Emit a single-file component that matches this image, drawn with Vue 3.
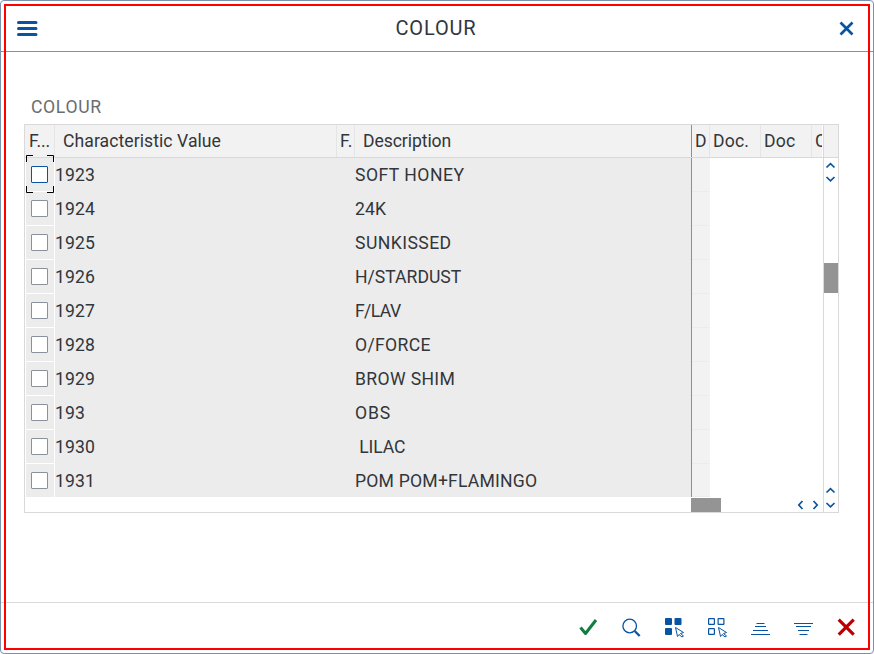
<script setup>
const rows = [
  { code: '1923', text: 'SOFT HONEY', spacing: 0.47 },
  { code: '1924', text: '24K', spacing: 0.1 },
  { code: '1925', text: 'SUNKISSED', spacing: 0.43 },
  { code: '1926', text: 'H/STARDUST', spacing: 0 },
  { code: '1927', text: 'F/LAV', spacing: -0.6 },
  { code: '1928', text: 'O/FORCE', spacing: 0.32 },
  { code: '1929', text: 'BROW SHIM', spacing: 0.35 },
  { code: '193', text: 'OBS', spacing: 0.8 },
  { code: '1930', text: '\u00a0LILAC', spacing: -0.15 },
  { code: '1931', text: 'POM POM+FLAMINGO', spacing: 0.2 },
]
</script>

<template>
  <div class="dialog">
    <header class="bar">
      <svg class="menu" width="22" height="16" viewBox="0 0 22 16"><path d="M2.500 1.500h17.500M2.500 7.500h17.500M2.500 13.500h17.500" stroke="#0854a0" stroke-width="3" stroke-linecap="round" /></svg>
      <h1>COLOUR</h1>
      <svg class="close" width="16" height="16" viewBox="0 0 16 16"><path d="M1.500 1.500l12 12M13.500 1.500L1.500 13.500" stroke="#0854a0" stroke-width="2.700" /></svg>
    </header>
    <main>
      <h2>COLOUR</h2>
      <div class="table">
        <div class="grid">
          <div class="head">
            <span class="c1">F...</span><span class="c2">Characteristic Value</span><span class="c3">F.</span><span class="c4">Description</span><span class="c5">D</span><span class="c6">Doc.</span><span class="c7">Doc</span><span class="c8">C</span>
          </div>
          <div v-for="(r, i) in rows" :key="r.code" class="row" :class="{ active: i === 0 }">
            <div class="check"><i></i><svg v-if="i === 0" class="focus" width="28" height="38" viewBox="0 0 28 38"><path d="M.5 7V.5H7M21 .5h6.500V7M.5 31v6.500H7M21 37.500h6.500V31" fill="none" stroke="#000" /></svg></div>
            <div class="code">{{ r.code }}</div>
            <div class="desc" :style="{ letterSpacing: r.spacing + 'px' }">{{ r.text }}</div>
            <div class="doc"></div>
          </div>
          <div class="hscroll">
            <div class="hthumb"></div>
            <svg width="24" height="14" viewBox="0 0 24 14"><path d="M5.500 3L1.800 7L5.500 11M16.500 3L20.200 7L16.500 11" fill="none" stroke="#0854a0" stroke-width="1.700" /></svg>
          </div>
        </div>
        <div class="vscroll">
          <div class="vhead"></div>
          <svg class="up" width="14" height="26" viewBox="0 0 14 26"><path d="M2.500 9.500L6.500 5.700L10.500 9.500M2.500 19L6.500 22.800L10.500 19" fill="none" stroke="#0854a0" stroke-width="1.700" /></svg>
          <div class="vthumb"></div>
          <svg class="down" width="14" height="26" viewBox="0 0 14 26"><path d="M2.500 6.500L6.500 2.700L10.500 6.500M2.500 17L6.500 20.800L10.500 17" fill="none" stroke="#0854a0" stroke-width="1.700" /></svg>
        </div>
      </div>
    </main>
    <footer>
      <svg viewBox="0 0 22 22"><path d="M2.500 11.500l5 6L18 4" fill="none" stroke="#107e3e" stroke-width="3" stroke-linejoin="round" /></svg>
      <svg viewBox="0 0 22 22"><circle cx="8.700" cy="10" r="6.800" fill="none" stroke="#0854a0" stroke-width="1.300" /><path d="M13.700 15l5 5" stroke="#0854a0" stroke-width="2.300" /></svg>
      <svg viewBox="0 0 22 22"><g fill="#0854a0"><rect x="1" y="2" width="7" height="7" rx="1" /><rect x="10.500" y="2" width="7" height="7" rx="1" /><rect x="1" y="12" width="7" height="7" rx="1" /></g><path d="M11.500 11.500l8 5-3 1 3 2.500-1.500 1-3-2.500-1.500 2z" fill="#fff" stroke="#0854a0" stroke-linejoin="round" /></svg>
      <svg viewBox="0 0 22 22"><g fill="none" stroke="#0854a0" stroke-width="1.200"><rect x="1.600" y="2.600" width="5.800" height="5.800" rx=".5" /><rect x="11.100" y="2.600" width="5.800" height="5.800" rx=".5" /><rect x="1.600" y="12.600" width="5.800" height="5.800" rx=".5" /></g><path d="M11.500 11.500l8 5-3 1 3 2.500-1.500 1-3-2.500-1.500 2z" fill="#fff" stroke="#0854a0" stroke-linejoin="round" /></svg>
      <svg viewBox="0 0 22 22"><path d="M6.500 7.500h8M5 10.500h11M3 14.500h15M1 18.500h19" stroke="#0854a0" /></svg>
      <svg viewBox="0 0 22 22"><path d="M1 7.500h19M3 10.500h15M5 14.500h11M6.500 18.500h8" stroke="#0854a0" /></svg>
      <svg viewBox="0 0 22 22"><path d="M2.700 3.700l15 15M17.700 3.700l-15 15" stroke="#b00" stroke-width="3.200" /></svg>
    </footer>
    <div class="outline"></div>
  </div>
</template>

<style>
body { margin: 0; background: #fff; }
</style>
<style scoped>
* { box-sizing: border-box; }
.dialog { position: relative; width: 874px; height: 654px; border: 1px solid #7b91ad; border-radius: 4px; display: flex; flex-direction: column; font-family: Roboto, "Liberation Sans", sans-serif; font-size: 17.6px; color: #32363a; overflow: hidden; }
.outline { position: absolute; top: 3px; left: 3px; width: 866px; height: 646px; border: 2px solid #f00; pointer-events: none; }
.bar { height: 51px; flex: none; border-bottom: 1px solid #7b91ad; display: flex; justify-content: space-between; align-items: center; padding: 6px 18px 0 15px; }
.menu, .close { display: block; }
h1 { font-size: 20px; line-height: 24px; font-weight: 400; margin: 0 0 2px -5px; letter-spacing: .85px; }
main { flex: 1; padding: 43px 0 0 23px; }
h2 { font-size: 17.6px; font-weight: 400; margin: 0; height: 29px; line-height: 24px; padding-left: 7px; color: #6a6d70; letter-spacing: .65px; }
.table { width: 815px; height: 389px; border: 1px solid #d9d9d9; display: flex; }
.grid { width: 798px; }
.head { display: flex; height: 33px; line-height: 32px; background: #f2f2f2; border-bottom: 1px solid #d9d9d9; }
.head span { flex: none; border-right: 1px solid #e5e5e5; overflow: hidden; white-space: nowrap; }
.head .c1 { width: 30px; padding-left: 4px; letter-spacing: -.2px; }
.head .c2 { width: 282px; padding-left: 8px; letter-spacing: .06px; }
.head .c3 { width: 18px; padding-left: 3px; }
.head .c4 { width: 337px; padding-left: 8px; border-right: 1px solid #8f8f8f; letter-spacing: -.08px; }
.head .c5 { width: 18px; padding-left: 3px; }
.head .c6 { width: 51px; padding-left: 3px; letter-spacing: .15px; }
.head .c7 { width: 51px; padding-left: 3px; letter-spacing: .15px; }
.head .c8 { width: 11px; padding-left: 3px; border-right-color: #fff; }
.row { height: 34px; display: flex; line-height: 34px; white-space: nowrap; }
.row:nth-child(11) { height: 33px; }
.check { position: relative; width: 30px; border: solid #fff; border-width: 0 1px 1px; padding: 8px 0 0 5px; background: #ececec; }
.row:nth-child(11) .check { border-bottom: 0; }
.active .check { z-index: 1; }
.check i { display: block; width: 17px; height: 17px; border: 1px solid #89919a; border-radius: 1px; background: #fff; }
.active .check i { border-color: #0854a0; }
.focus { position: absolute; left: 0; top: -3px; }
.code { width: 300px; background: #ececec; letter-spacing: .15px; }
.desc { width: 337px; background: #ececec; border-right: 1px solid #8f8f8f; }
.doc { width: 18px; background: #f2f2f2; border-bottom: 1px solid #ececec; }
.hscroll { display: flex; height: 14px; justify-content: space-between; margin-top: 1px; padding: 0 2px 0 666px; }
.hthumb { width: 30px; background: #949494; }
.vscroll { width: 15px; border-left: 1px solid #d9d9d9; display: flex; flex-direction: column; }
.vhead { height: 33px; background: #f2f2f2; border-bottom: 1px solid #d9d9d9; }
.up, .down { display: block; }
.vthumb { height: 30px; background: #949494; margin: 79px 0 193px; }
footer { height: 51px; border-top: 1px solid #d9d9d9; display: flex; justify-content: flex-end; align-items: center; gap: 21px; padding: 0 15px 2px 0; }
footer svg { width: 22px; height: 22px; display: block; }
</style>
